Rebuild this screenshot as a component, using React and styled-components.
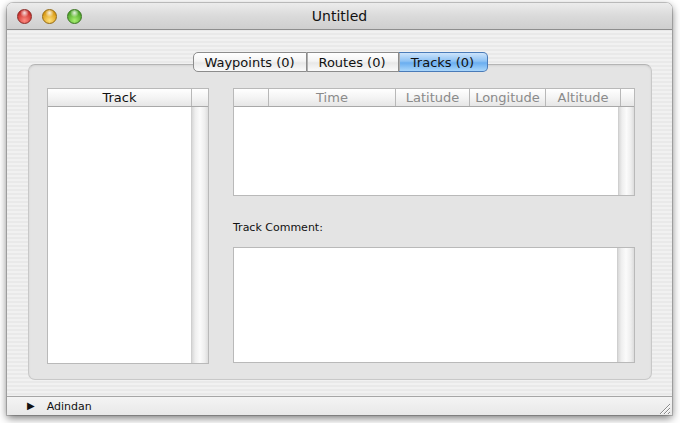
import styled, { createGlobalStyle } from 'styled-components';

const GlobalStyle = createGlobalStyle`
  html, body {
    margin: 0;
    padding: 0;
    background: #ffffff;
    font-family: "DejaVu Sans", "Liberation Sans", Arial, sans-serif;
  }
`

const Page = styled.div`
  width: 680px;
  height: 423px;
  padding: 3px 0 0 7px;
  box-sizing: border-box;
`
const Window = styled.div`
  width: 665px;
  height: 412px;
  display: flex;
  flex-direction: column;
  border-radius: 6px 6px 0 0;
  overflow: hidden;
  box-shadow: 0 3px 9px rgba(0, 0, 0, 0.55), 0 0 0 1px rgba(0, 0, 0, 0.18);
  background: repeating-linear-gradient(to bottom, #f1f1f1 0px, #f1f1f1 2px, #e9e9e9 2px, #e9e9e9 4px);
`
const TitleBar = styled.div`
  height: 27px;
  flex: none;
  display: flex;
  align-items: center;
  position: relative;
  background: linear-gradient(to bottom, #ececec 0%, #dadada 50%, #cfcfcf 100%);
  border-bottom: 1px solid #8e8e8e;
  box-sizing: border-box;
`
const Lights = styled.div`
  display: flex;
  gap: 10px;
  padding-left: 10px;
`
const Light = styled.div`
  width: 15px;
  height: 15px;
  border-radius: 50%;
  box-sizing: border-box;
  border: 1px solid ${p => p.$edge};
  background:
    radial-gradient(circle at 50% 22%, rgba(255,255,255,0.85) 0, rgba(255,255,255,0.2) 28%, rgba(255,255,255,0) 36%),
    radial-gradient(circle at 50% 80%, ${p => p.$light} 0, ${p => p.$base} 70%);
`
const Title = styled.div`
  position: absolute;
  left: 0;
  right: 0;
  text-align: center;
  font-size: 14px;
  color: #111;
  pointer-events: none;
`
const Content = styled.div`
  flex: 1;
  display: flex;
  flex-direction: column;
  padding: 22px 20px 0 21px;
  border-bottom: 1px solid #a6a6a6;
`
const TabRow = styled.div`
  display: flex;
  justify-content: center;
  margin-bottom: -8px;
  position: relative;
  z-index: 1;
`
const Tab = styled.div`
  width: ${p => p.$w}px;
  height: 20px;
  box-sizing: border-box;
  display: flex;
  align-items: center;
  justify-content: center;
  font-size: 13px;
  color: #111;
  border: 1px solid #8c8c8c;
  border-left-width: ${p => (p.$first ? 1 : 0)}px;
  border-radius: ${p => (p.$first ? '5px 0 0 5px' : p.$last ? '0 5px 5px 0' : '0')};
  background: ${p => p.$active
    ? 'linear-gradient(to bottom, #cde4fb 0%, #8ec2f4 45%, #6aaef0 55%, #a9d6fb 100%)'
    : 'linear-gradient(to bottom, #ffffff 0%, #f4f4f4 45%, #e8e8e8 55%, #fafafa 100%)'};
  border-color: ${p => (p.$active ? '#4a7bb8' : '#8c8c8c')};
  & + & { box-shadow: inset 1px 0 0 #b0b0b0; }
`
const TabBox = styled.div`
  height: 316px;
  box-sizing: border-box;
  display: flex;
  gap: 24px;
  padding: 23px 16px 16px 18px;
  border-radius: 7px;
  background: #e4e4e4;
  border: 1px solid #c8c8c8;
  border-top-color: #b4b4b4;
  box-shadow: inset 0 1px 2px rgba(0, 0, 0, 0.08);
`
const Table = styled.div`
  width: ${p => p.$w}px;
  height: ${p => p.$h}px;
  flex: none;
  display: flex;
  flex-direction: column;
  background: #fff;
  border: 1px solid #b9b9b9;
  box-sizing: border-box;
`
const Header = styled.div`
  height: 17px;
  flex: none;
  display: flex;
  background: linear-gradient(to bottom, #ffffff 0%, #f4f4f4 50%, #e6e6e6 100%);
  border-bottom: 1px solid #a8a8a8;
`
const HeadCell = styled.div`
  width: ${p => (p.$w ? `${p.$w}px` : 'auto')};
  flex: ${p => (p.$w ? 'none' : 1)};
  text-align: center;
  font-size: 13px;
  line-height: 17px;
  white-space: nowrap;
  overflow: hidden;
  color: ${p => (p.$dim ? '#8a8a8a' : '#111')};
  border-right: 1px solid #b8b8b8;
  box-sizing: border-box;
  &:last-child { border-right: none; }
`
const Body = styled.div`
  flex: 1;
  display: flex;
`
const Rows = styled.div`
  flex: 1;
`
const Scroller = styled.div`
  width: ${p => p.$w}px;
  flex: none;
  background: linear-gradient(to right, #d8d8d8 0%, #eeeeee 20%, #fbfbfb 50%, #eeeeee 80%, #dcdcdc 100%);
  border-left: 1px solid #cfcfcf;
`
const RightColumn = styled.div`
  display: flex;
  flex-direction: column;
`
const FieldLabel = styled.div`
  font-size: 11px;
  color: #111;
  padding: 25px 0 13px;
  line-height: 13px;
`
const BottomBar = styled.div`
  height: 18px;
  flex: none;
  display: flex;
  align-items: center;
  gap: 12px;
  padding-left: 20px;
  font-size: 11px;
  color: #111;
  background: linear-gradient(to bottom, #f4f4f4 0%, #e8e8e8 100%);
`
const Disclosure = styled.span`
  font-size: 10px;
  line-height: 1;
`
const Label = styled.span`
  flex: 1;
`
const Grip = styled.svg`
  width: 14px;
  height: 14px;
  align-self: flex-end;
  margin-right: 1px;
`

const App = () => {
  return (
    <>
      <GlobalStyle />
      <Page>
        <Window>
          <TitleBar>
            <Lights>
              <Light $base="#c9302c" $light="#ff8a80" $edge="#8a2a26" />
              <Light $base="#d99a14" $light="#ffe07a" $edge="#946a12" />
              <Light $base="#4ea42a" $light="#a8f070" $edge="#3a7420" />
            </Lights>
            <Title>Untitled</Title>
          </TitleBar>
          <Content>
            <TabRow>
              <Tab $w={114} $first>Waypoints (0)</Tab>
              <Tab $w={92}>Routes (0)</Tab>
              <Tab $w={89} $last $active>Tracks (0)</Tab>
            </TabRow>
            <TabBox>
              <Table $w={162} $h={276}>
                <Header>
                  <HeadCell>Track</HeadCell>
                  <HeadCell $w={16} />
                </Header>
                <Body>
                  <Rows />
                  <Scroller $w={16} />
                </Body>
              </Table>
              <RightColumn>
                <Table $w={402} $h={108}>
                  <Header>
                    <HeadCell $w={35} />
                    <HeadCell $w={127} $dim>Time</HeadCell>
                    <HeadCell $w={74} $dim>Latitude</HeadCell>
                    <HeadCell $w={76} $dim>Longitude</HeadCell>
                    <HeadCell $w={75} $dim>Altitude</HeadCell>
                    <HeadCell $dim />
                  </Header>
                  <Body>
                    <Rows />
                    <Scroller $w={15} />
                  </Body>
                </Table>
                <FieldLabel>Track Comment:</FieldLabel>
                <Table $w={402} $h={116}>
                  <Body>
                    <Rows />
                    <Scroller $w={16} />
                  </Body>
                </Table>
              </RightColumn>
            </TabBox>
          </Content>
          <BottomBar>
            <Disclosure>▶</Disclosure>
            <Label>Adindan</Label>
            <Grip viewBox="0 0 14 14">
              <path d="M13 3 L3 13 M13 7 L7 13 M13 11 L11 13" stroke="#8a8a8a" strokeWidth="1" />
              <path d="M13 4 L4 13 M13 8 L8 13 M13 12 L12 13" stroke="#ffffff" strokeWidth="1" />
            </Grip>
          </BottomBar>
        </Window>
      </Page>
    </>
  )
}

export default App
